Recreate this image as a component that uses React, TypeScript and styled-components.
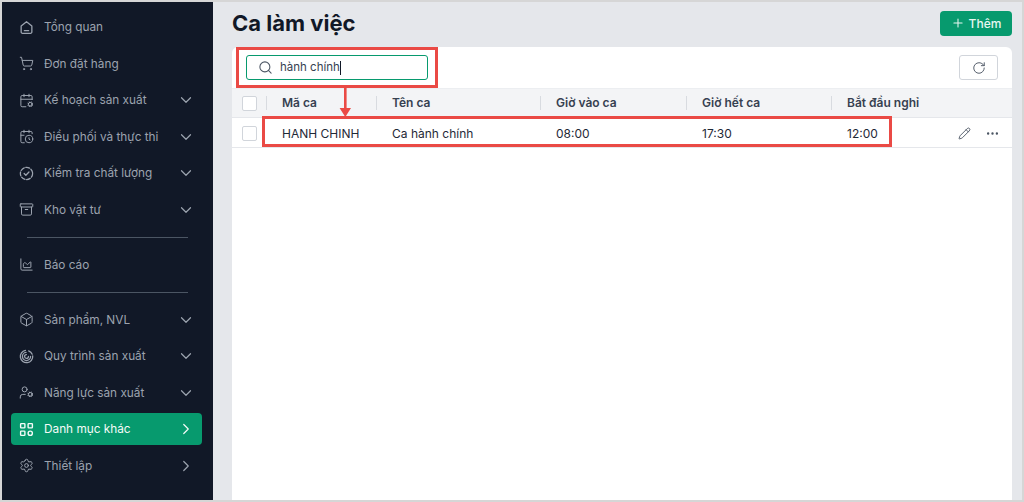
import React from "react";
import styled, { createGlobalStyle } from "styled-components";
import {
  ShoppingCart, CalendarCog, CalendarClock, Archive, ChartArea, Box, UserCog, Settings,
  ChevronDown, ChevronRight, Search, RotateCw, Pencil, Ellipsis, Plus,
} from "lucide-react";

const Global = createGlobalStyle`
  html, body { margin: 0; padding: 0; width: 1024px; height: 502px; overflow: hidden; background: #fff; }
  * { box-sizing: border-box; }
  body { font-family: Inter, "Noto Sans", sans-serif; }
`;

const Frame = styled.div`
  position: relative; width: 1024px; height: 502px;
  border: 2px solid #d6d6d6; display: flex; background: #e5e7eb;
`;
const Sidebar = styled.nav`
  width: 211px; height: 100%; background: #111827; padding: 9px 11px 0 9px;
  display: flex; flex-direction: column; gap: 4.5px; flex: none;
`;
const Item = styled.div<{ $active?: boolean }>`
  height: 32px; flex: none; display: flex; align-items: center; gap: 10px; padding: 0 7px 0 8px; border-radius: 4px;
  font-size: 11.8px; font-weight: 400;
  background: ${(p) => (p.$active ? "#079a6e" : "transparent")};
  color: ${(p) => (p.$active ? "#f5fbf8" : "#9ca3af")};
  svg { flex: none; }
`;
const Label = styled.span`flex: 1; white-space: nowrap;`;
const Divider = styled.div<{ $extra?: number }>`
  height: 1px; background: #4b5563; flex: none;
  margin: 6.5px 14px ${(p) => 6 + (p.$extra ?? 0)}px 16px;
`;
const Main = styled.main`
  flex: 1; min-width: 0; padding: 0 10px 0 19px; display: flex; flex-direction: column;
`;
const Header = styled.header`
  height: 45px; flex: none; display: flex; align-items: center; justify-content: space-between; padding-bottom: 4px;
`;
const Title = styled.h1`
  margin: 0; font-size: 22px; line-height: 28px; font-weight: 700; color: #111827;
`;
const AddButton = styled.button`
  width: 72px; height: 25px; border: 0; border-radius: 4px; background: #079a6e; color: #e9f7f1; margin-top: 1px;
  display: flex; align-items: center; justify-content: center; gap: 4px;
  font: 500 12px Inter, sans-serif; padding: 0;
`;
const Card = styled.section`
  flex: 1; background: #fff; border-radius: 6px 6px 0 0; display: flex; flex-direction: column;
`;
const Toolbar = styled.div`
  height: 41px; flex: none; display: flex; align-items: center; justify-content: space-between; padding: 0 14px;
`;
const SearchBox = styled.div`
  width: 182px; height: 25px; border: 1px solid #079a6e; border-radius: 3px; display: flex; align-items: center;
  gap: 7px; padding-left: 11px; color: #374151; font-size: 11.5px; background: #fff;
  svg { color: #4b5563; }
`;
const Caret = styled.span`
  display: inline-block; width: 1px; height: 14px; background: #111827; vertical-align: middle;
`;
const IconButton = styled.button`
  width: 39px; height: 25px; background: #fff; border: 1px solid #d1d5db; border-radius: 3px; padding: 0;
  display: flex; align-items: center; justify-content: center; color: #4b5563;
`;
const Row = styled.div<{ $head?: boolean }>`
  display: grid; grid-template-columns: 34px 110px 164px 146px 145px 1fr 54px; flex: none; align-items: center;
  height: 30px; padding-top: ${(p) => (p.$head ? "0" : "2px")};
  background: ${(p) => (p.$head ? "#f3f4f6" : "#fff")};
  border-top: ${(p) => (p.$head ? "1px solid #eceef1" : "0")};
  border-bottom: 1px solid #e5e7eb;
  color: ${(p) => (p.$head ? "#374151" : "#1f2937")};
  font-size: 12px; font-weight: ${(p) => (p.$head ? 600 : 400)};
`;
const CheckCell = styled.div`padding-left: 10px; display: flex;`;
const Check = styled.span`
  width: 15px; height: 15px; border: 1px solid #d1d5db; border-radius: 2px; background: #fff; display: block;
`;
const Cell = styled.div<{ $rule?: boolean }>`
  padding-left: 15px; white-space: nowrap; height: 14px; line-height: 14px;
  border-left: 1px solid ${(p) => (p.$rule ? "#d8dbe0" : "transparent")};
`;
const Actions = styled.div`
  display: flex; align-items: center; gap: 14px; color: #4b5563;
`;
const Outline = styled.div<{ $l: number; $t: number; $w: number; $h: number }>`
  position: absolute; left: ${(p) => p.$l}px; top: ${(p) => p.$t}px; width: ${(p) => p.$w}px; height: ${(p) => p.$h}px;
  border: 3px solid #ea4a45; pointer-events: none;
`;
const Arrow = styled.svg`
  position: absolute; left: 335px; top: 85px; pointer-events: none;
`;

const HomeIcon = () => (
  <svg width="15" height="15" viewBox="0 0 14 14" fill="none" stroke="currentColor" strokeWidth="1.2" strokeLinejoin="round" strokeLinecap="round">
    <path d="M2 5.6 7 1.6l5 4v5.6a1.2 1.2 0 0 1-1.2 1.2H3.2A1.2 1.2 0 0 1 2 11.2z" />
    <path d="M5 10h4" />
  </svg>
);
const DashCheck = () => (
  <svg width="15" height="15" viewBox="0 0 14 14" fill="none" stroke="currentColor" strokeWidth="1.2" strokeLinecap="round" strokeLinejoin="round">
    <circle cx="7" cy="7" r="5.7" strokeDasharray="3.6 1.5" />
    <path d="m4.8 7 1.6 1.6 2.9-3" />
  </svg>
);
const SpiralIcon = () => (
  <svg width="15" height="15" viewBox="0 0 14 14" fill="none" stroke="currentColor" strokeWidth="1.2" strokeLinecap="round">
    <path d="M12.8 6.4A5.8 5.8 0 1 1 6 1.3" />
    <path d="M10.8 6.8A3.8 3.8 0 1 1 6.6 3.2" />
    <path d="M8.8 7a1.8 1.8 0 1 1-1.9-1.8" />
    <path d="M9 1.8c1.6.6 2.8 1.8 3.3 3" />
  </svg>
);
const GridIcon = () => (
  <svg width="15" height="15" viewBox="0 0 14 14" fill="none" stroke="currentColor" strokeWidth="1.3">
    <rect x="1.5" y="1.5" width="4" height="4" rx=".6" />
    <rect x="8.5" y="1.5" width="4" height="4" rx=".6" />
    <rect x="1.5" y="8.5" width="4" height="4" rx=".6" />
    <circle cx="10.5" cy="10.5" r="2" />
  </svg>
);

const ic = { size: 15, strokeWidth: 1.6 };
const Down = () => <ChevronDown size={18} strokeWidth={1.6} />;
const Right = () => <ChevronRight size={18} strokeWidth={1.6} />;

export default function App() {
  return (
    <Frame>
      <Global />
      <Sidebar>
        <Item><HomeIcon /><Label>Tổng quan</Label></Item>
        <Item><ShoppingCart {...ic} /><Label>Đơn đặt hàng</Label></Item>
        <Item><CalendarCog {...ic} /><Label>Kế hoạch sản xuất</Label><Down /></Item>
        <Item><CalendarClock {...ic} /><Label>Điều phối và thực thi</Label><Down /></Item>
        <Item><DashCheck /><Label>Kiểm tra chất lượng</Label><Down /></Item>
        <Item><Archive {...ic} /><Label>Kho vật tư</Label><Down /></Item>
        <Divider $extra={0.5} />
        <Item><ChartArea {...ic} /><Label>Báo cáo</Label></Item>
        <Divider $extra={0.5} />
        <Item><Box {...ic} /><Label>Sản phẩm, NVL</Label><Down /></Item>
        <Item><SpiralIcon /><Label>Quy trình sản xuất</Label><Down /></Item>
        <Item><UserCog {...ic} /><Label>Năng lực sản xuất</Label><Down /></Item>
        <Item $active><GridIcon /><Label>Danh mục khác</Label><Right /></Item>
        <Item><Settings {...ic} /><Label>Thiết lập</Label><Right /></Item>
      </Sidebar>
      <Main>
        <Header>
          <Title>Ca làm việc</Title>
          <AddButton><Plus size={14} strokeWidth={1.8} />Thêm</AddButton>
        </Header>
        <Card>
          <Toolbar>
            <SearchBox><Search size={15} strokeWidth={1.7} /><span>hành chính<Caret /></span></SearchBox>
            <IconButton><RotateCw size={14} strokeWidth={1.6} /></IconButton>
          </Toolbar>
          <Row $head>
            <CheckCell><Check /></CheckCell>
            <Cell $rule>Mã ca</Cell>
            <Cell $rule>Tên ca</Cell>
            <Cell $rule>Giờ vào ca</Cell>
            <Cell $rule>Giờ hết ca</Cell>
            <Cell $rule>Bắt đầu nghỉ</Cell>
            <span />
          </Row>
          <Row>
            <CheckCell><Check /></CheckCell>
            <Cell>HANH CHINH</Cell>
            <Cell>Ca hành chính</Cell>
            <Cell>08:00</Cell>
            <Cell>17:30</Cell>
            <Cell>12:00</Cell>
            <Actions><Pencil size={13} strokeWidth={1.7} /><Ellipsis size={15} strokeWidth={1.8} /></Actions>
          </Row>
        </Card>
      </Main>
      <Outline $l={234} $t={45} $w={202} $h={41} />
      <Outline $l={260} $t={114} $w={630} $h={31} />
      <Arrow width="16" height="32" viewBox="0 0 16 32">
        <path d="M7 0h2.6v21H14l-5.7 9L2.6 21H7z" fill="#ea4a45" />
      </Arrow>
    </Frame>
  );
}
